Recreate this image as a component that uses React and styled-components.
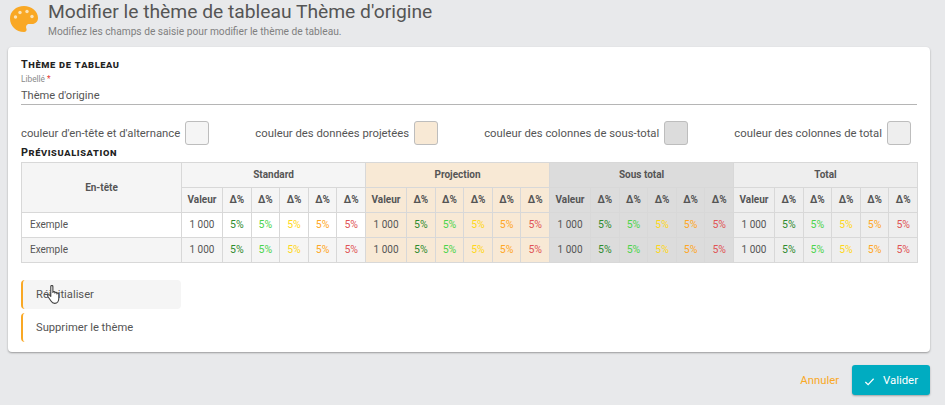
import styled, { createGlobalStyle } from 'styled-components';

const GlobalStyle = createGlobalStyle`
    html, body {
        margin: 0;
        padding: 0;
        background: #e8e9eb;
        font-family: Roboto, "Liberation Sans", sans-serif;
        color: #555;
    }
`;

const Page = styled.div`
    width: 945px;
    height: 405px;
    overflow: hidden;
    padding: 0 15px 0 8px;
    box-sizing: border-box;
    display: flex;
    flex-direction: column;
`;

const Header = styled.header`
    height: 47px;
    display: flex;
    gap: 10px;
    padding-left: 2px;
`;

const PaletteIcon = styled.svg`
    width: 28px;
    height: 26px;
    margin-top: 6px;
    flex-shrink: 0;
`;

const HeaderText = styled.div`
    display: flex;
    flex-direction: column;
`;

const Title = styled.h1`
    margin: 0;
    font-size: 19.25px;
    font-weight: 400;
    line-height: 24px;
    color: #555;
`;

const Subtitle = styled.p`
    margin: 0;
    font-size: 10.2px;
    line-height: 14px;
    padding-top: 1px;
    color: #808080;
`;

const Card = styled.main`
    height: 305px;
    background: #fff;
    border-radius: 4px;
    box-shadow: 0 1px 2px rgba(0, 0, 0, 0.35);
    padding: 11px 13px 0;
    box-sizing: border-box;
    position: relative;
`;

const SectionTitle = styled.h2`
    margin: 0;
    font-size: 10.8px;
    line-height: 13px;
    font-weight: 700;
    font-variant: small-caps;
    letter-spacing: 0.6px;
    color: #222;
`;

const FieldLabel = styled.label`
    display: block;
    font-size: 8.3px;
    line-height: 10px;
    margin-top: 3px;
    color: #8a8a8a;

    span {
        color: #e53935;
    }
`;

const TextValue = styled.div`
    font-size: 11.1px;
    line-height: 23px;
    height: 20px;
    border-bottom: 1px solid #b5b5b5;
    color: #555;
`;

const ColorRow = styled.div`
    display: flex;
    justify-content: space-between;
    align-items: center;
    margin-top: 16px;
    padding-right: 6px;
    height: 24px;
`;

const ColorField = styled.div`
    display: flex;
    align-items: center;
    gap: 5px;
    font-size: 11.3px;
    color: #555;
`;

const Swatch = styled.span`
    width: 24px;
    height: 24px;
    box-sizing: border-box;
    border: 1px solid #bdbdbd;
    border-radius: 3px;
    background: ${props => props.$color};
`;

const PreviewTitle = styled(SectionTitle)`
    margin-top: 1px;
    margin-bottom: 3px;
`;

const Table = styled.table`
    width: 896px;
    table-layout: fixed;
    border-collapse: collapse;
    font-size: 10px;
    border: 1px solid #d8d8d8;
`;

const Cell = styled.td`
    height: 25px;
    padding: 0 0 1px;
    box-sizing: border-box;
    text-align: center;
    border: 1px solid #d8d8d8;
    background: ${props => props.$bg || 'transparent'};
    color: ${props => props.$color || '#555'};
    font-weight: ${props => (props.$bold ? 700 : 400)};
    font-size: ${props => (props.$delta ? '10.5px' : '10px')};
`;

const LabelCell = styled(Cell)`
    text-align: left;
    padding-left: 8px;
`;

const Actions = styled.div`
    display: flex;
    flex-direction: column;
    gap: 4px;
    margin-top: 17px;
`;

const ActionButton = styled.button`
    width: 160px;
    height: 29px;
    padding: 0 0 0 13px;
    border: none;
    border-left: 2px solid #f9a825;
    border-radius: 4px;
    background: ${props => (props.$hover ? '#f5f5f5' : 'transparent')};
    text-align: left;
    font-family: inherit;
    font-size: 11.2px;
    color: #555;
`;

const HandCursor = styled.svg`
    position: absolute;
    left: 39px;
    top: 238px;
    width: 14px;
    height: 20px;
`;

const Footer = styled.footer`
    display: flex;
    justify-content: flex-end;
    align-items: center;
    gap: 13px;
    margin-top: 13px;
`;

const CancelLink = styled.a`
    font-size: 11.3px;
    color: #f9a825;
`;

const SubmitButton = styled.button`
    width: 78px;
    height: 30px;
    border: none;
    border-radius: 3px;
    background: #00acc1;
    box-shadow: 0 1px 2px rgba(0, 0, 0, 0.3);
    color: #fff;
    font-family: inherit;
    font-size: 11.4px;
    display: flex;
    align-items: center;
    justify-content: center;
    gap: 8px;
    padding: 0;

    svg {
        width: 11px;
        height: 11px;
        margin-top: 3px;
    }
`;

const GROUPS = [
    { name: 'Standard', bg: '#f5f5f5', body: null, alt: '#f5f5f5' },
    { name: 'Projection', bg: '#f8e9d5', body: '#f8e9d5', alt: '#f8e9d5' },
    { name: 'Sous total', bg: '#dcdcdc', body: '#dcdcdc', alt: '#dcdcdc' },
    { name: 'Total', bg: '#eeeeee', body: '#eeeeee', alt: '#eeeeee' },
];

const DELTAS = ['#2e8b2e', '#4cd44c', '#ffd71a', '#ffa726', '#e05555'];

function PreviewTable() {
    const rows = [false, true];
    return (
        <Table>
            <colgroup>
                <col style={{ width: 160 }} />
                {GROUPS.map(g => [41, 28.6, 28.6, 28.6, 28.6, 28.6].map((w, i) => (
                    <col key={g.name + i} style={{ width: w }} />
                )))}
            </colgroup>
            <thead>
                <tr>
                    <Cell as="th" rowSpan={2} $bg="#f5f5f5" $bold>En-tête</Cell>
                    {GROUPS.map(g => (
                        <Cell as="th" key={g.name} colSpan={6} $bg={g.bg} $bold>{g.name}</Cell>
                    ))}
                </tr>
                <tr>
                    {GROUPS.map(g => [
                        <Cell as="th" key={g.name + 'v'} $bg={g.bg} $bold>Valeur</Cell>,
                        ...DELTAS.map((c, i) => (
                            <Cell as="th" key={g.name + i} $bg={g.bg} $bold>Δ%</Cell>
                        )),
                    ])}
                </tr>
            </thead>
            <tbody>
                {rows.map((alt, r) => (
                    <tr key={r}>
                        <LabelCell $bg={alt ? '#f5f5f5' : '#fff'}>Exemple</LabelCell>
                        {GROUPS.map(g => {
                            const bg = alt ? g.alt : g.body;
                            return [
                                <Cell key={g.name + 'v'} $bg={bg}>1 000</Cell>,
                                ...DELTAS.map((c, i) => (
                                    <Cell key={g.name + i} $bg={bg} $color={c} $delta>5%</Cell>
                                )),
                            ];
                        })}
                    </tr>
                ))}
            </tbody>
        </Table>
    );
}

export default function App() {
    return (
        <Page>
            <GlobalStyle />
            <Header>
                <PaletteIcon viewBox="0 0 28 26">
                    <path
                        d="M14 0C6 0 0 5.5 0 12.5 0 20 6 26 14 26c2 0 3-2 2.5-3-1-2.500 0-5 2.500-5h3c3.500 0 6-2.500 6-6C28 5 21.500 0 14 0z"
                        fill="#f9a825"
                    />
                    <circle cx="5.5" cy="11" r="1.7" fill="#fbe3b8" />
                    <circle cx="10" cy="6.5" r="1.7" fill="#fbe3b8" />
                    <circle cx="17" cy="5.5" r="1.7" fill="#fbe3b8" />
                    <circle cx="22" cy="10.5" r="1.7" fill="#fbe3b8" />
                </PaletteIcon>
                <HeaderText>
                    <Title>Modifier le thème de tableau Thème d'origine</Title>
                    <Subtitle>Modifiez les champs de saisie pour modifier le thème de tableau.</Subtitle>
                </HeaderText>
            </Header>
            <Card>
                <SectionTitle>Thème de tableau</SectionTitle>
                <FieldLabel>Libellé <span>*</span></FieldLabel>
                <TextValue>Thème d'origine</TextValue>
                <ColorRow>
                    <ColorField>couleur d'en-tête et d'alternance <Swatch $color="#f5f5f5" /></ColorField>
                    <ColorField>couleur des données projetées <Swatch $color="#f8e9d5" /></ColorField>
                    <ColorField>couleur des colonnes de sous-total <Swatch $color="#dcdcdc" /></ColorField>
                    <ColorField>couleur des colonnes de total <Swatch $color="#eeeeee" /></ColorField>
                </ColorRow>
                <PreviewTitle>Prévisualisation</PreviewTitle>
                <PreviewTable />
                <Actions>
                    <ActionButton $hover>Réinitialiser</ActionButton>
                    <ActionButton>Supprimer le thème</ActionButton>
                </Actions>
                <HandCursor viewBox="0.5 0.5 12 18">
                    <path
                        d="M3.6 1.8c0-1.2 1.9-1.2 1.9 0v5.4c0-1.1 1.8-1.1 1.8 0v.6c0-1.1 1.8-1.1 1.8 0v.7c0-1 1.7-1 1.7 0v4.2c0 2.2-1.4 4.3-3.6 4.3H7.1c-1.5 0-2.5-.8-3.3-2.1L1 10.8c-.7-1.2.8-2.1 1.7-1.100l.9 1.100z"
                        fill="#fff"
                        stroke="#444"
                        strokeWidth="1"
                        strokeLinejoin="round"
                    />
                </HandCursor>
            </Card>
            <Footer>
                <CancelLink>Annuler</CancelLink>
                <SubmitButton>
                    <svg viewBox="0 0 12 12" fill="none" stroke="#fff" strokeWidth="1.3">
                        <path d="M1.5 6.5l3 3L10.5 3" />
                    </svg>
                    Valider
                </SubmitButton>
            </Footer>
        </Page>
    );
}
